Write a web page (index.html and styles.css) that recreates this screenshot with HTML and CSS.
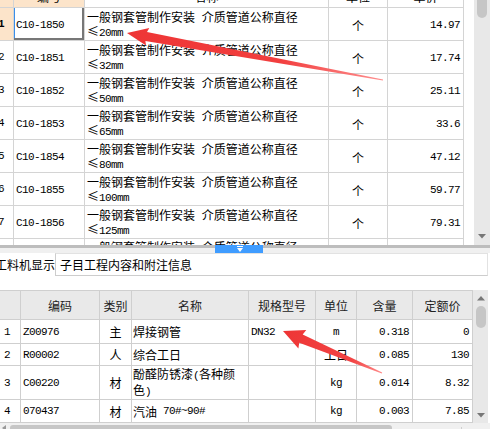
FILE: index.html
```html
<!DOCTYPE html>
<html lang="zh-CN">
<head>
<meta charset="utf-8">
<title>定额子目</title>
<link rel="stylesheet" href="styles.css">
</head>
<body>
<section class="top-pane">
  <div class="tgrid-wrap">
    <div class="tgrid">
      <div class="th rn hl"></div>
      <div class="th hl">编号</div>
      <div class="th">名称</div>
      <div class="th">单位</div>
      <div class="th">单价</div>

      <div class="td rn hl sel"><span>1</span></div>
      <div class="td code focus"><span class="n">C10-1850</span></div>
      <div class="td desc"><div>一般钢套管制作安装 介质管道公称直径<br>≤<span class="n">20mm</span></div></div>
      <div class="td unit">个</div>
      <div class="td num"><span class="n">14.97</span></div>

      <div class="td rn"><span>2</span></div>
      <div class="td code"><span class="n">C10-1851</span></div>
      <div class="td desc"><div>一般钢套管制作安装 介质管道公称直径<br>≤<span class="n">32mm</span></div></div>
      <div class="td unit">个</div>
      <div class="td num"><span class="n">17.74</span></div>

      <div class="td rn"><span>3</span></div>
      <div class="td code"><span class="n">C10-1852</span></div>
      <div class="td desc"><div>一般钢套管制作安装 介质管道公称直径<br>≤<span class="n">50mm</span></div></div>
      <div class="td unit">个</div>
      <div class="td num"><span class="n">25.11</span></div>

      <div class="td rn"><span>4</span></div>
      <div class="td code"><span class="n">C10-1853</span></div>
      <div class="td desc"><div>一般钢套管制作安装 介质管道公称直径<br>≤<span class="n">65mm</span></div></div>
      <div class="td unit">个</div>
      <div class="td num"><span class="n">33.6</span></div>

      <div class="td rn"><span>5</span></div>
      <div class="td code"><span class="n">C10-1854</span></div>
      <div class="td desc"><div>一般钢套管制作安装 介质管道公称直径<br>≤<span class="n">80mm</span></div></div>
      <div class="td unit">个</div>
      <div class="td num"><span class="n">47.12</span></div>

      <div class="td rn"><span>6</span></div>
      <div class="td code"><span class="n">C10-1855</span></div>
      <div class="td desc"><div>一般钢套管制作安装 介质管道公称直径<br>≤<span class="n">100mm</span></div></div>
      <div class="td unit">个</div>
      <div class="td num"><span class="n">59.77</span></div>

      <div class="td rn"><span>7</span></div>
      <div class="td code"><span class="n">C10-1856</span></div>
      <div class="td desc"><div>一般钢套管制作安装 介质管道公称直径<br>≤<span class="n">125mm</span></div></div>
      <div class="td unit">个</div>
      <div class="td num"><span class="n">79.31</span></div>

      <div class="td rn"></div>
      <div class="td code"></div>
      <div class="td desc partial"><div>一般钢套管制作安装 介质管道公称直径<br>≤<span class="n">150mm</span></div></div>
      <div class="td unit"></div>
      <div class="td num"></div>
    </div>
  </div>
  <div class="vscroll vs-top">
    <div class="thumb"></div>
    <svg class="arr" width="8" height="5" viewBox="0 0 8 5"><polygon points="0,0 8,0 4,4.5" fill="#777"/></svg>
  </div>
</section>

<div class="splitter">
  <div class="handle">
    <svg width="6" height="6" viewBox="0 0 6 6"><rect x="0" y="0" width="6" height="1" fill="#fff"/><polygon points="0,2 6,2 3,6" fill="#fff"/></svg>
  </div>
</div>

<div class="tabs">
  <div class="tab active"><span>工料机显示</span></div>
  <div class="tab">子目工程内容和附注信息</div>
</div>

<section class="bottom-pane">
  <div class="bgrid">
    <div class="bh"></div>
    <div class="bh">编码</div>
    <div class="bh">类别</div>
    <div class="bh">名称</div>
    <div class="bh">规格型号</div>
    <div class="bh">单位</div>
    <div class="bh">含量</div>
    <div class="bh">定额价</div>

    <div class="bd brn"><span class="n">1</span></div>
    <div class="bd left"><span class="n">Z00976</span></div>
    <div class="bd mid">主</div>
    <div class="bd name">焊接钢管</div>
    <div class="bd left"><span class="n">DN32</span></div>
    <div class="bd mid"><span class="n">m</span></div>
    <div class="bd right"><span class="n">0.318</span></div>
    <div class="bd right"><span class="n">0</span></div>

    <div class="bd brn"><span class="n">2</span></div>
    <div class="bd left"><span class="n">R00002</span></div>
    <div class="bd mid">人</div>
    <div class="bd name">综合工日</div>
    <div class="bd left"></div>
    <div class="bd mid">工日</div>
    <div class="bd right"><span class="n">0.085</span></div>
    <div class="bd right"><span class="n">130</span></div>

    <div class="bd brn"><span class="n">3</span></div>
    <div class="bd left"><span class="n">C00220</span></div>
    <div class="bd mid">材</div>
    <div class="bd name wrap"><div>酚醛防锈漆<span class="n">(</span>各种颜<br>色<span class="n">)</span></div></div>
    <div class="bd left"></div>
    <div class="bd mid"><span class="n">kg</span></div>
    <div class="bd right"><span class="n">0.014</span></div>
    <div class="bd right"><span class="n">8.32</span></div>

    <div class="bd brn"><span class="n">4</span></div>
    <div class="bd left"><span class="n">070437</span></div>
    <div class="bd mid">材</div>
    <div class="bd name">汽油<span class="n">&nbsp;70#~90#</span></div>
    <div class="bd left"></div>
    <div class="bd mid"><span class="n">kg</span></div>
    <div class="bd right"><span class="n">0.003</span></div>
    <div class="bd right"><span class="n">7.85</span></div>
  </div>
  <div class="vscroll vs-bottom">
    <svg class="arr up" width="8" height="5" viewBox="0 0 8 5"><polygon points="0,4.5 8,4.5 4,0" fill="#777"/></svg>
    <div class="thumb"></div>
    <svg class="arr down" width="8" height="5" viewBox="0 0 8 5"><polygon points="0,0 8,0 4,4.5" fill="#777"/></svg>
  </div>
</section>

<div class="hscroll">
  <svg class="harr" width="4" height="6" viewBox="0 0 4 6"><polygon points="4,0 4,6 0,3" fill="#999"/></svg>
  <div class="hthumb"></div>
  <svg class="harr right" width="4" height="6" viewBox="0 0 4 6"><polygon points="0,0 0,6 4,3" fill="#999"/></svg>
</div>

<svg class="annot" width="490" height="429" viewBox="0 0 490 429">
  <defs>
    <linearGradient id="g1" gradientUnits="userSpaceOnUse" x1="127" y1="33" x2="383" y2="80">
      <stop offset="0" stop-color="#ee3535"/>
      <stop offset="0.6" stop-color="#f23f3f"/>
      <stop offset="1" stop-color="#ff8f8f"/>
    </linearGradient>
    <linearGradient id="g2" gradientUnits="userSpaceOnUse" x1="283" y1="331" x2="382" y2="373">
      <stop offset="0" stop-color="#ee3535"/>
      <stop offset="0.7" stop-color="#f24444"/>
      <stop offset="1" stop-color="#ff8c8c"/>
    </linearGradient>
  </defs>
  <polygon fill="url(#g1)" points="127,33 149.3,27.9 147,32.1 383.1,79.4 382.9,80.6 145.4,41 146,45.6"/>
  <polygon fill="url(#g2)" points="283,331 306.3,330 302.7,334.5 382.2,372.4 381.8,373.6 299.2,342.8 298.4,348.4"/>
</svg>
</body>
</html>
```

FILE: styles.css
```css
* {
  box-sizing: border-box;
  margin: 0;
  padding: 0;
}

html,
body {
  width: 490px;
  height: 429px;
  overflow: hidden;
  background: #fff;
}

body {
  position: relative;
  font-family: "Noto Sans CJK SC", "Noto Sans", sans-serif;
  font-size: 12px;
  color: #000;
}

.n {
  font-family: "Liberation Mono", "DejaVu Sans Mono", monospace;
  font-size: 11px;
  letter-spacing: -0.6px;
}

/* ---------- top pane ---------- */
.top-pane {
  display: flex;
  height: 245px;
}

.tgrid-wrap {
  width: 474px;
  height: 245px;
  overflow: hidden;
}

.tgrid {
  display: grid;
  grid-template-columns: 14px 71px 244px 59px 76px;
  grid-template-rows: 23px;
  grid-auto-rows: 33px;
  margin-top: -15px;
}

.tgrid > div {
  display: flex;
  align-items: center;
  overflow: hidden;
  white-space: nowrap;
  border-right: 1px solid #d4d4d4;
  border-bottom: 1px solid #d4d4d4;
}

.th {
  justify-content: center;
}

.hl {
  background: #fce4ca;
}

.rn {
  font-family: "Liberation Mono", monospace;
  font-size: 11px;
}

.rn span {
  margin-left: -2px;
}

.sel {
  font-weight: bold;
}

.code {
  padding-left: 2px;
  padding-top: 2px;
}

.focus {
  box-shadow: inset -2px -2px 0 #777, inset 1px 0 0 #3b8ee8;
}

.tgrid > .desc {
  padding-left: 2px;
  padding-top: 2px;
  line-height: 14px;
  word-spacing: 4px;
}

.unit {
  justify-content: center;
  padding-top: 2px;
}

.num {
  justify-content: flex-end;
  padding-right: 3px;
  padding-top: 2px;
}

.tgrid > .partial {
  align-items: flex-start;
  padding-top: 1px;
}

.vscroll {
  display: flex;
  flex-direction: column;
  align-items: center;
  background: #e8e8e8;
}

.vs-top {
  width: 16px;
  justify-content: space-between;
  padding-bottom: 6px;
}

.vs-top .thumb {
  width: 10px;
  height: 22px;
  margin-top: -4px;
  border-radius: 5px;
  background: #c6c6c6;
}

/* ---------- splitter ---------- */
.splitter {
  height: 8px;
  padding-left: 215px;
  background: linear-gradient(#bdbdbd 0 3px, #f0f0f0 3px);
}

.handle {
  width: 48px;
  height: 8px;
  background: #3f9cff;
  display: flex;
  justify-content: center;
  padding-top: 1px;
}

.handle svg {
  margin-left: 1px;
}

/* ---------- tabs ---------- */
.tabs {
  display: flex;
  height: 23px;
  padding-right: 2px;
}

.tab {
  display: flex;
  align-items: center;
  font-size: 12px;
  white-space: nowrap;
}

.tab.active {
  width: 55px;
  overflow: hidden;
}

.tab.active span {
  margin-left: -5px;
}

.tab:not(.active) {
  flex: 1;
  padding-left: 4px;
  border-left: 1px solid #cdcdcd;
  border-top: 1px solid #e2e2e2;
  border-right: 1px solid #e2e2e2;
  border-bottom: 1px solid #cdcdcd;
}

/* ---------- bottom pane ---------- */
.bottom-pane {
  display: flex;
  height: 133px;
  margin-top: 14px;
  padding-right: 2px;
}

.bgrid {
  display: grid;
  width: 473px;
  grid-template-columns: 21px 79px 32px 117px 67px 41px 56px 60px;
  grid-template-rows: 30px 24px 22px 34px 23px;
}

.bgrid > div {
  display: flex;
  align-items: center;
  white-space: nowrap;
  overflow: hidden;
  border-right: 1px solid #cfcfcf;
  border-bottom: 1px solid #cfcfcf;
}

.bh {
  justify-content: center;
  background: #e9e9e9;
  border-top: 1px solid #cfcfcf;
  color: #222;
}

.brn {
  padding-left: 4px;
}

.left {
  padding-left: 2px;
}

.name {
  padding-left: 1px;
}

.bgrid > .wrap {
  line-height: 13px;
  white-space: normal;
}

.mid {
  justify-content: center;
}

.right {
  justify-content: flex-end;
  padding-right: 3px;
}

.vs-bottom {
  width: 15px;
}

.vs-bottom .up {
  margin-top: 6px;
}

.vs-bottom .thumb {
  width: 10px;
  height: 22px;
  margin-top: 5px;
  border-radius: 5px;
  background: #c6c6c6;
}

.vs-bottom .down {
  margin-top: auto;
  margin-bottom: 5px;
}

/* ---------- horizontal scrollbar ---------- */
.hscroll {
  display: flex;
  align-items: flex-end;
  height: 6px;
  background: #f0f0f0;
  padding-right: 25px;
}

.harr {
  margin-left: 2px;
  margin-bottom: -2px;
}

.hthumb {
  width: 382px;
  height: 4px;
  margin-left: 4px;
  border-radius: 3px 3px 0 0;
  background: #c6c6c6;
}

.harr.right {
  margin-left: auto;
}

/* ---------- annotation overlay ---------- */
.annot {
  position: absolute;
  top: 0;
  left: 0;
  pointer-events: none;
}
```
